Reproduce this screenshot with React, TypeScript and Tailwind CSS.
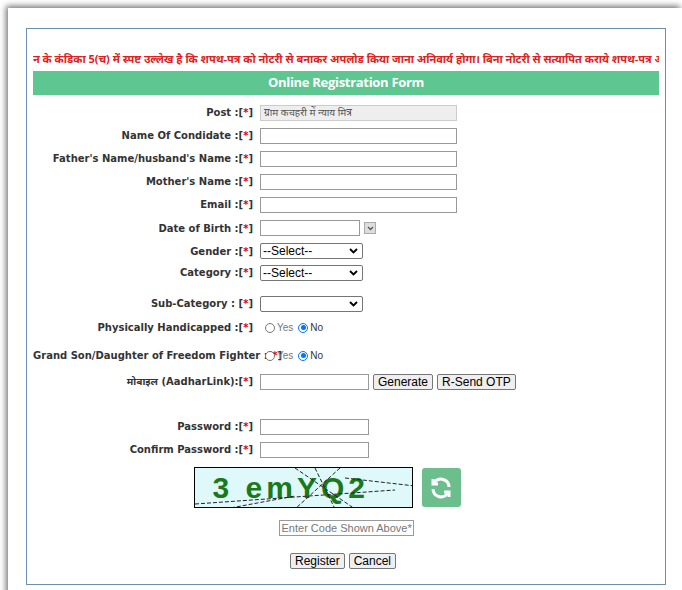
import React from "react";

const lab = "w-[227px] shrink-0 text-right font-bold text-[10px] text-[#333] pr-[7px] whitespace-nowrap";
const star = <span className="text-[#d00]">*</span>;
const inp = "h-[16px] border border-[#999] bg-white";

function Row({ label, h, children, sep = " :" }: { label: string; h: number; children?: React.ReactNode; sep?: string }) {
  return (
    <div className="flex items-center" style={{ height: h }}>
      <div className={lab}>{label}{sep}[{star}]</div>
      <div className="flex items-center">{children}</div>
    </div>
  );
}

function Sel({ w }: { w: number }) {
  return (
    <div className="h-[16px] border border-[#767676] rounded-[2px] bg-white flex items-center justify-between pl-[2px] pr-[4px] text-[12px] text-black" style={{ width: w, fontFamily: "Arial, 'Liberation Sans', sans-serif" }}>
      <span className="leading-none">--Select--</span>
      <svg width="9" height="6" viewBox="0 0 9 6"><path d="M1 1l3.5 3.5L8 1" stroke="#000" strokeWidth="1.8" fill="none" /></svg>
    </div>
  );
}

function Radio({ checked }: { checked?: boolean }) {
  return checked ? (
    <span className="inline-block w-[10px] h-[10px] rounded-full border border-[#0075ff] bg-white relative mr-[2px]"><span className="absolute left-[1.5px] top-[1.5px] w-[5px] h-[5px] rounded-full bg-[#0075ff]" /></span>
  ) : (
    <span className="inline-block w-[10px] h-[10px] rounded-full border border-[#777] bg-white mr-[2px]" />
  );
}

function YesNo() {
  return (
    <div className="flex items-center text-[10px] text-[#333] ml-[5px]" style={{ fontFamily: "Arial, 'Liberation Sans', sans-serif" }}>
      <Radio /><span className="mr-[5px] text-[#777]">Yes</span><Radio checked /><span>No</span>
    </div>
  );
}

const btn = "h-[16px] border border-[#767676] bg-[#efefef] rounded-[2px] text-[12px] px-[4px] leading-none text-black flex items-center whitespace-nowrap";

export default function App() {
  return (
    <div className="w-[682px] h-[590px] bg-white overflow-hidden" style={{ fontFamily: "'DejaVu Sans', 'Noto Sans', sans-serif" }}>
      <div className="mt-[8px] ml-[8px] h-[600px] bg-white shadow-[-2px_-2px_6px_rgba(0,0,0,0.55)] pt-[20px] pl-[18px]">
        <div className="w-[640px] h-[557px] border border-[#6c8fae] px-[6px]">
          <div className="mt-[22px] h-[20px] overflow-hidden whitespace-nowrap text-[11px] font-bold text-[#e02020]" style={{ fontFamily: "'Noto Sans', sans-serif" }}>
            न के कंडिका 5(च) में स्पष्ट उल्लेख है कि शपथ-पत्र को नोटरी से बनाकर अपलोड किया जाना अनिवार्य होगा। बिना नोटरी से सत्यापित कराये शपथ-पत्र अपलोड
          </div>
          <div className="h-[24px] bg-[#5ec690] flex items-center justify-center text-white font-bold text-[13px]" style={{ fontFamily: "'Open Sans', sans-serif", letterSpacing: "-0.3px" }}>
            Online Registration Form
          </div>
          <div className="mt-[6px]">
            <Row label="Post" h={23}><div className="w-[197px] h-[16px] border border-[#ccc] bg-[#eee] text-[10px] text-[#555] px-[3px] flex items-center" style={{ fontFamily: "'Noto Sans', sans-serif" }}>ग्राम कचहरी में न्याय मित्र</div></Row>
            <Row label="Name Of Condidate" h={23}><div className={`w-[197px] ${inp}`} /></Row>
            <Row label="Father's Name/husband's Name" h={23}><div className={`w-[197px] ${inp}`} /></Row>
            <Row label="Mother's Name" h={23}><div className={`w-[197px] ${inp}`} /></Row>
            <Row label="Email" h={23}><div className={`w-[197px] ${inp}`} /></Row>
            <Row label="Date of Birth" h={24}>
              <div className={`w-[100px] ${inp}`} />
              <div className="ml-[4px] w-[12px] h-[12px] border border-[#aaa] bg-[#ddd] flex items-center justify-center"><svg width="7" height="5" viewBox="0 0 7 5"><path d="M1 1l2.5 2.5L6 1" stroke="#555" strokeWidth="1.3" fill="none" /></svg></div>
            </Row>
            <Row label="Gender" h={22}><Sel w={103} /></Row>
            <Row label="Category" h={21}><Sel w={103} /></Row>
            <div className="h-[9px]" />
            <Row label="Sub-Category" sep=" : " h={23}>
              <div className="w-[103px] h-[16px] border border-[#767676] rounded-[2px] bg-white flex items-center justify-end pr-[4px]"><svg width="9" height="6" viewBox="0 0 9 6"><path d="M1 1l3.5 3.5L8 1" stroke="#000" strokeWidth="1.8" fill="none" /></svg></div>
            </Row>
            <Row label="Physically Handicapped" h={25}><YesNo /></Row>
            <div className="h-[3px]" />
            <Row label="Grand Son/Daughter of Freedom Fighter" h={25}><YesNo /></Row>
            <Row label="मोबाइल (AadharLink)" sep=":" h={27}>
              <div className={`w-[109px] ${inp}`} />
              <div className={`${btn} ml-[4px]`} style={{ fontFamily: "Arial, 'Liberation Sans', sans-serif" }}>Generate</div>
              <div className={`${btn} ml-[4px]`} style={{ fontFamily: "Arial, 'Liberation Sans', sans-serif" }}>R-Send OTP</div>
            </Row>
            <div className="h-[20px]" />
            <Row label="Password" h={23}><div className={`w-[109px] ${inp}`} /></Row>
            <Row label="Confirm Password" h={23}><div className={`w-[109px] ${inp}`} /></Row>
          </div>
          <div className="flex justify-center items-center gap-[9px] mt-[6px] -ml-[38px]">
            <div className="w-[219px] h-[41px] border border-black bg-[#dff8fa] relative overflow-hidden flex items-center pl-[18px]">
              <span className="text-[#1a7a1a] font-bold text-[30px] tracking-[4px]" style={{ fontFamily: "Arial, 'Liberation Sans', sans-serif" }}>3 emYQ2</span>
              <svg className="absolute inset-0" width="219" height="41">
                <path d="M100 0 L160 41 M145 0 L100 41 M120 0 L140 41 M0 36 L200 22 M30 41 L100 28 M150 10 L220 18" stroke="#222" strokeWidth="1" strokeDasharray="4 2" fill="none" />
              </svg>
            </div>
            <div className="w-[39px] h-[39px] rounded-[3px] bg-[#6cbf8c] flex items-center justify-center">
              <svg width="24" height="24" viewBox="0 0 24 24" fill="none" stroke="#fff" strokeWidth="3"><path d="M20 11a8 8 0 0 0-14.5-4.5M4 13a8 8 0 0 0 14.5 4.5" /><path d="M4 3v5h5M20 21v-5h-5" /></svg>
            </div>
          </div>
          <div className="flex justify-center mt-[12px]">
            <div className="w-[135px] h-[16px] border border-[#999] text-[11px] text-[#777] flex items-center px-[2px] whitespace-nowrap overflow-hidden" style={{ fontFamily: "Arial, 'Liberation Sans', sans-serif" }}>Enter Code Shown Above*</div>
          </div>
          <div className="flex justify-center gap-[4px] mt-[17px] -ml-[6px]" style={{ fontFamily: "Arial, 'Liberation Sans', sans-serif" }}>
            <div className={btn}>Register</div>
            <div className={btn}>Cancel</div>
          </div>
        </div>
      </div>
    </div>
  );
}
